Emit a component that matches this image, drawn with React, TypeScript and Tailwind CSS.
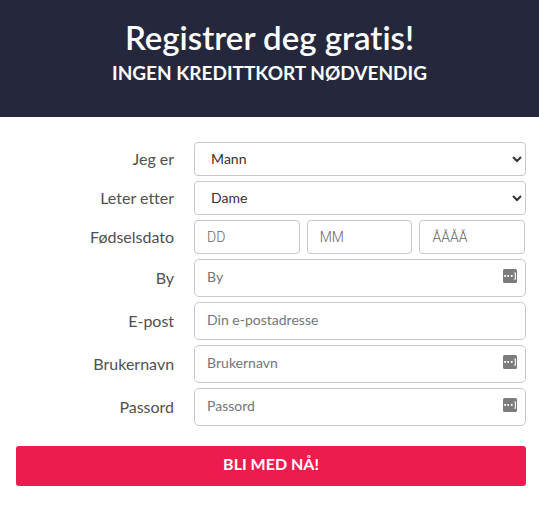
import type { ReactNode } from "react";

const selects = [
    { id: "gender", label: "Jeg er", options: ["Mann", "Dame"], value: "Mann" },
    { id: "seeking", label: "Leter etter", options: ["Dame", "Mann"], value: "Dame" },
];

const birthdate = [
    { placeholder: "DD", label: "Dag" },
    { placeholder: "MM", label: "Måned" },
    { placeholder: "ÅÅÅÅ", label: "År" },
];

const fields = [
    { id: "city", label: "By", placeholder: "By", type: "text", autofill: true },
    { id: "email", label: "E-post", placeholder: "Din e-postadresse", type: "email", autofill: false },
    { id: "username", label: "Brukernavn", placeholder: "Brukernavn", type: "text", autofill: true },
    { id: "password", label: "Passord", placeholder: "Passord", type: "password", autofill: true },
];

function AutofillIcon() {
    return (
        <svg
            className="absolute top-[10px] right-[9px] h-[14px] w-[14px]"
            viewBox="0 0 14 14"
            aria-hidden="true"
        >
            <rect width="14" height="14" rx="1.5" fill="#7c7c7c" />
            <rect x="1.2" y="6" width="1.8" height="1.8" fill="#fff" />
            <rect x="4.2" y="6" width="1.8" height="1.8" fill="#fff" />
            <rect x="7.8" y="6" width="1.8" height="1.8" fill="#fff" />
            <rect x="11.8" y="3.6" width="1.1" height="7" fill="#fff" />
            <path d="M10.6 3.9h1.5M10.6 10.3h1.5" stroke="#fff" strokeWidth="0.5" />
        </svg>
    );
}

function Row({ id, label, children }: { id: string; label: string; children: ReactNode }) {
    return (
        <div className="flex items-center gap-5">
            <label htmlFor={id} className="w-[31%] shrink-0 text-right text-base text-[#505050]">
                {label}
            </label>
            <div className="relative min-w-0 flex-1">{children}</div>
        </div>
    );
}

export default function App() {
    return (
        <main className="bg-white font-['Lato','Liberation_Sans',sans-serif] [font-variant-ligatures:none]">
            <header className="bg-[#25283d] px-4 pt-4 pb-[30px] text-center text-white">
                <h1 className="text-[33px] leading-[43px] font-semibold">Registrer deg gratis!</h1>
                <h2 className="text-[19px] leading-7 font-bold">INGEN KREDITTKORT NØDVENDIG</h2>
            </header>

            <form className="pt-[25px] pr-[13px] pb-5 pl-4" onSubmit={(e) => e.preventDefault()}>
                <div className="flex flex-col gap-[5px]">
                    {selects.map((field) => (
                        <Row key={field.id} id={field.id} label={field.label}>
                            <select
                                id={field.id}
                                defaultValue={field.value}
                                className="block h-[34px] w-full rounded border border-[#c8c8c8] bg-white px-3 pb-0.5 text-sm text-[#333]"
                            >
                                {field.options.map((option) => (
                                    <option key={option}>{option}</option>
                                ))}
                            </select>
                        </Row>
                    ))}

                    <Row id="birth-0" label="Fødselsdato">
                        <div className="flex gap-[7px] pr-px">
                            {birthdate.map((part, index) => (
                                <input
                                    key={part.label}
                                    id={`birth-${index}`}
                                    aria-label={part.label}
                                    placeholder={part.placeholder}
                                    inputMode="numeric"
                                    className="h-[34px] min-w-0 flex-1 rounded border border-[#c8c8c8] bg-white px-3 font-['Roboto',sans-serif] text-sm font-light text-[#333] placeholder:text-[#666]"
                                />
                            ))}
                        </div>
                    </Row>

                    {fields.map((field) => (
                        <Row key={field.id} id={field.id} label={field.label}>
                            <input
                                id={field.id}
                                type={field.type}
                                placeholder={field.placeholder}
                                className="block h-[38px] w-full rounded-[5px] border border-[#c8c8c8] bg-white pr-8 pb-1 pl-3 text-sm text-[#333] placeholder:text-[#757575]"
                            />
                            {field.autofill && <AutofillIcon />}
                        </Row>
                    ))}
                </div>

                <button
                    type="submit"
                    className="mt-5 block h-10 w-full rounded-[3px] bg-[#ee1c4e] pb-1 text-base font-bold text-white"
                >
                    BLI MED NÅ!
                </button>
            </form>
        </main>
    );
}
